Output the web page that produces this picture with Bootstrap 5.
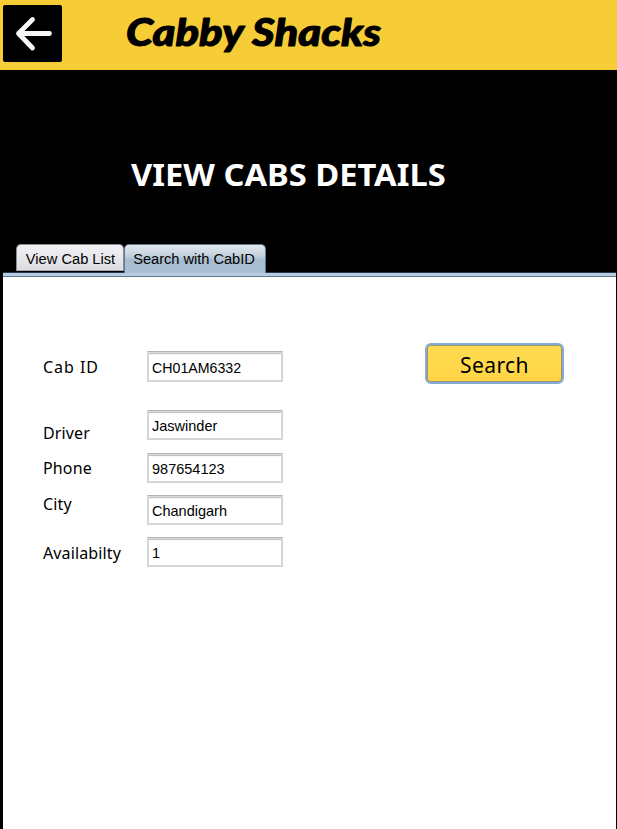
<!DOCTYPE html>
<html lang="en">
<head>
<meta charset="utf-8">
<meta name="viewport" content="width=device-width, initial-scale=1">
<title>Cabby Shacks</title>
<link href="https://cdn.jsdelivr.net/npm/bootstrap@5.3.0/dist/css/bootstrap.min.css" rel="stylesheet">
<style>
body{background:#000;font-family:"Noto Sans","DejaVu Sans",sans-serif;color:#000;height:829px;overflow:hidden}
.topbar{height:70px;background:#f7cd37;padding:5px 3px}
.back-btn{width:59px;height:57px;background:#000;border-radius:2px}
.brand-text{margin-left:58px;font:italic 900 38px Lato,sans-serif}
.hero{height:174px;padding:83px 0 0 131px}
.page-title{display:inline-block;font-size:30px;line-height:44px;font-weight:700;color:#fff;white-space:nowrap;transform:scaleX(1.09);transform-origin:0 0}
.tab-strip{height:28px;padding-left:16px;font-family:"Liberation Sans",Arial,sans-serif}
.tab-strip .nav-link{font-size:14.67px;line-height:28px;padding:0;color:#000;text-align:center;white-space:nowrap;border:1px solid #8b8d94;border-bottom:0;border-radius:5px 5px 0 0}
.tab-strip .tab-list{width:108px;height:27px;padding-left:1px;background:linear-gradient(#f2f2f5,#dcdde3);border-bottom:1px solid #a7a7ad}
.tab-strip .tab-search{width:142px;height:29px;padding-right:2px;letter-spacing:-.03px;background:linear-gradient(#e0e7ed 0,#c5d3df 35%,#a7bccf 55%,#a9c0d5 100%);border-color:#61788c}
.pane{margin:0 1px 0 3px;height:557px;background:#fff;border-top:1px solid #28384e}
.pane-rule{height:4px;background:#b8cde2;border-bottom:1px solid #64788e}
.pane-body{padding:74px 0 0 40px}
.field-row{height:31px}
.field-label{width:104px;font-size:16px;line-height:31px;white-space:nowrap;letter-spacing:.13px}
.lbl-id{letter-spacing:.95px;padding-top:1px}
.field-box{width:136px;height:31px;padding:3px 4px 0;border:1px solid #d2d2d2;border-top-color:#b4b4b4;border-radius:1px;background:#fff;box-shadow:inset 0 0 0 1px #dadada,inset 0 2px 1px #bbb;font:14.5px "Liberation Sans",Arial,sans-serif;color:#000}
.val-id{font-size:14.2px}
.field-row+.field-row .field-box{height:30px;padding-top:2px}
.search-btn{width:139px;height:41px;margin:-8px 0 0 142px;padding:2px 0 0;border:2px solid #82acd5;border-radius:6px;background:linear-gradient(#ffdb50,#ffd546);box-shadow:inset 0 0 0 1px #9d956b;font-size:21px;line-height:36px;letter-spacing:.4px;color:#000}
.search-btn:hover,.search-btn:active{background:#ffd546}
.gap-lg{margin-top:28px}.gap-sm{margin-top:12px}.gap-xs{margin-top:11px}
.lbl-driver{padding-top:8px}.lbl-city{margin-top:-6px}
.lbl-avail{padding-top:1px}
</style>
</head>
<body>
<header class="topbar d-flex align-items-start">
  <a href="#" class="back-btn flex-shrink-0" aria-label="Back">
    <svg class="d-block" width="59" height="57" viewBox="0 0 59 57" fill="none" stroke="#f7f7f7" stroke-width="4.800" stroke-linecap="round" stroke-linejoin="round"><path d="M46.500 28.500H15.500M29.500 14.500L15.500 28.500L29.500 43"/></svg>
  </a>
  <svg class="brand-text flex-shrink-0" width="270" height="62"><text x="6" y="41" textLength="255" lengthAdjust="spacingAndGlyphs" stroke="#000" stroke-width="1" stroke-linejoin="round">Cabby Shacks</text></svg>
</header>
<section class="hero"><h1 class="page-title m-0">VIEW CABS DETAILS</h1></section>
<ul class="nav tab-strip flex-nowrap">
  <li><a class="nav-link tab-list" href="#">View Cab List</a></li>
  <li><a class="nav-link tab-search" href="#">Search with CabID</a></li>
</ul>
<main class="pane">
  <div class="pane-rule"></div>
  <form class="pane-body">
    <div class="field-row d-flex"><label class="field-label lbl-id" for="f1">Cab ID</label><input id="f1" class="field-box val-id" value="CH01AM6332"><button type="button" class="btn search-btn">Search</button></div>
    <div class="field-row d-flex gap-lg"><label class="field-label lbl-driver" for="f2">Driver</label><input id="f2" class="field-box" value="Jaswinder"></div>
    <div class="field-row d-flex gap-sm"><label class="field-label" for="f3">Phone</label><input id="f3" class="field-box" value="987654123"></div>
    <div class="field-row d-flex gap-xs"><label class="field-label lbl-city" for="f4">City</label><input id="f4" class="field-box" value="Chandigarh"></div>
    <div class="field-row d-flex gap-xs"><label class="field-label lbl-avail" for="f5">Availabilty</label><input id="f5" class="field-box" value="1"></div>
  </form>
</main>
<script src="https://cdn.jsdelivr.net/npm/bootstrap@5.3.0/dist/js/bootstrap.bundle.min.js"></script>
</body>
</html>
